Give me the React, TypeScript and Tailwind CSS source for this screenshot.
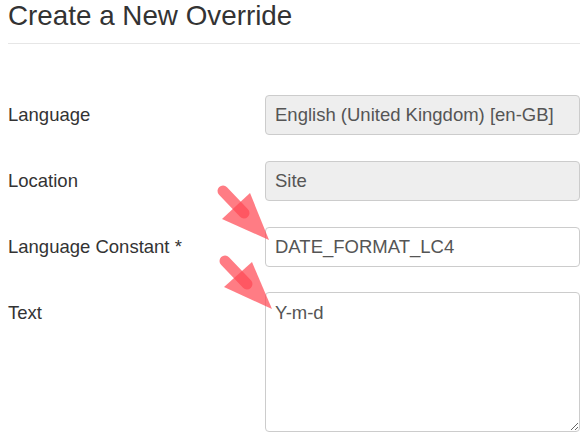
const inputClass =
    'h-10 w-[315px] rounded border border-[#cccccc] px-[9px] text-[#555555] text-[18.5px] outline-none'

function Arrow({ tail, tailEnd, head }: { tail: string; tailEnd: string; head: string }) {
    const [x1, y1] = tail.split(',')
    const [x2, y2] = tailEnd.split(',')
    return (
        <g>
            <line x1={x1} y1={y1} x2={x2} y2={y2} stroke="#ff4a55" strokeOpacity="0.72" strokeWidth="11" strokeLinecap="round" />
            <polygon points={head} fill="#ff4a55" fillOpacity="0.72" />
        </g>
    )
}

export default function App() {
    return (
        <div className="relative h-[442px] w-[588px] overflow-hidden bg-white px-2 font-['Liberation_Sans',Arial,sans-serif] text-[#333333]">
            <h1 className="h-11 border-b border-[#e6e6e6] text-[27.8px] leading-[32px]">Create a New Override</h1>

            <form className="mt-[51px] flex flex-col">
                <div className="flex items-center justify-between">
                    <label className="text-[18.5px]">Language</label>
                    <input readOnly value="English (United Kingdom) [en-GB]" className={`${inputClass} bg-[#eeeeee]`} />
                </div>
                <div className="mt-[26px] flex items-center justify-between">
                    <label className="text-[18.5px]">Location</label>
                    <input readOnly value="Site" className={`${inputClass} bg-[#eeeeee]`} />
                </div>
                <div className="mt-[26px] flex items-center justify-between">
                    <label className="text-[18.5px]">Language Constant *</label>
                    <input readOnly value="DATE_FORMAT_LC4" className={`${inputClass} bg-white`} />
                </div>
                <div className="mt-[25px] flex items-start justify-between">
                    <label className="pt-[7px] text-[18.5px]">Text</label>
                    <textarea
                        readOnly
                        value="Y-m-d"
                        className="h-[140px] w-[315px] rounded border border-[#cccccc] bg-white px-[9px] py-[7px] text-[18.5px] leading-[26px] text-[#555555] outline-none"
                    />
                </div>
            </form>

            {/* red arrows painted over the screenshot */}
            <svg className="absolute left-0 top-0 pointer-events-none" width="588" height="442" viewBox="0 0 588 442">
                <Arrow tail="223,191" tailEnd="244,213" head="269,240 250,193 222,219" />
                <Arrow tail="225,261" tailEnd="247,284" head="272,309 252,262 224,287" />
            </svg>
        </div>
    )
}
